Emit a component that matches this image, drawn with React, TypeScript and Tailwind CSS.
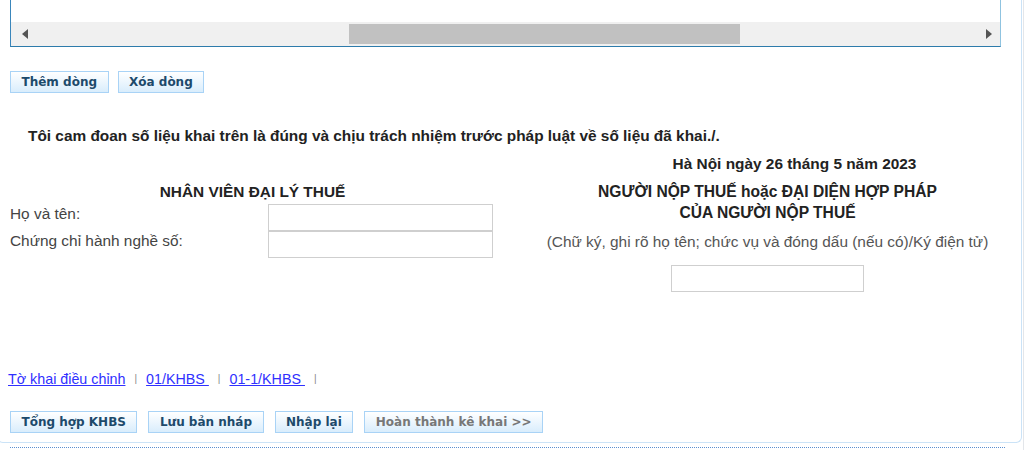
import React from 'react';

const btn =
  "h-[22px] px-[10.5px] border border-[#a9d3f6] bg-gradient-to-b from-white to-[#d9edfc] text-[12px] font-bold leading-none";

const Button: React.FC<{ label: string; disabled?: boolean }> = ({ label, disabled }) => (
  <button
    className={btn + (disabled ? " text-[#777]" : " text-[#1d4a6b]")}
    style={{ fontFamily: '"DejaVu Sans", Verdana, sans-serif' }}
  >
    {label}
  </button>
);

const Sep = () => <span className="mx-[9px] text-[10px] text-[#888]">|</span>;

export default function App() {
  return (
    <div
      className="w-[1024px] h-[450px] overflow-hidden bg-white relative text-[#333]"
      style={{ fontFamily: '"Liberation Sans", Arial, sans-serif' }}
    >
      <div className="absolute right-0 top-0 h-full w-px bg-[#e3e6ea]" />
      <div className="-ml-[3px] w-[1025px] h-[443px] border-x border-b border-[#cbe3f7] rounded-b-[6px] flex flex-col">
        {/* grid box with horizontal scrollbar */}
        <div className="ml-[12px] w-[991px] h-[47px] border-l border-l-[#3a86bb] border-r border-r-[#8fc3e0] border-b border-b-[#2d7bab] flex flex-col">
          <div className="flex-1 bg-white" />
          <div className="h-[24px] bg-[#f0f0f0] flex items-center">
            <div className="w-[17px] flex justify-end">
              <svg width="6" height="10" viewBox="0 0 6 10"><path d="M6 0 L0 5 L6 10 Z" fill="#555" /></svg>
            </div>
            <div className="flex-1 h-full py-[2px] flex">
              <div className="ml-[321px] w-[391px] h-full bg-[#c1c1c1]" />
            </div>
            <div className="w-[17px] flex justify-start pl-[3px]">
              <svg width="6" height="10" viewBox="0 0 6 10"><path d="M0 0 L6 5 L0 10 Z" fill="#555" /></svg>
            </div>
          </div>
        </div>

        <div className="ml-[12px] mt-[24px] flex gap-[9px]">
          <Button label="Thêm dòng" />
          <Button label="Xóa dòng" />
        </div>

        <p className="ml-[30px] mt-[34px] text-[15.4px] font-bold text-[#222] leading-[18px]">
          Tôi cam đoan số liệu khai trên là đúng và chịu trách nhiệm trước pháp luật về số liệu đã khai./.
        </p>

        <div className="ml-[2px] grid grid-cols-[505px_1fr] gap-x-[9px]">
          <div />
          <div className="mt-[10px] pl-[54px] text-center text-[15.4px] font-bold text-[#222] leading-[18px]">
            Hà Nội ngày 26 tháng 5 năm 2023
          </div>

          <div className="flex flex-col">
            <div className="mt-[8px] text-center text-[15.4px] font-bold text-[#222] leading-[21px]">
              NHÂN VIÊN ĐẠI LÝ THUẾ
            </div>
            <div className="mt-[2px] flex">
              <div className="w-[268px] pl-[10px] flex flex-col text-[15.4px] text-[#444]">
                <span className="h-[27px] leading-[20px]">Họ và tên:</span>
                <span className="h-[27px] leading-[20px]">Chứng chỉ hành nghề số:</span>
              </div>
              <div className="flex flex-col">
                <input className="w-[225px] h-[27px] border border-[#cfcfcf] bg-white outline-none" />
                <input className="w-[225px] h-[27px] border border-[#cfcfcf] bg-white outline-none" />
              </div>
            </div>
          </div>

          <div className="flex flex-col items-center">
            <div className="mt-[8px] text-center text-[15.6px] font-bold text-[#222] leading-[21px]">
              NGƯỜI NỘP THUẾ hoặc ĐẠI DIỆN HỢP PHÁP
              <br />
              CỦA NGƯỜI NỘP THUẾ
            </div>
            <div className="mt-[9px] text-[15.4px] text-[#555] leading-[20px]">
              (Chữ ký, ghi rõ họ tên; chức vụ và đóng dấu (nếu có)/Ký điện tử)
            </div>
            <input className="mt-[13px] w-[193px] h-[27px] border border-[#cfcfcf] bg-white outline-none" />
          </div>
        </div>

        <div className="ml-[10px] mt-[79px] text-[14.3px] leading-[16px] flex items-center">
          <a href="#" className="text-[#3030ff] underline">Tờ khai điều chỉnh</a>
          <Sep />
          <a href="#" className="text-[#3030ff] underline">01/KHBS&nbsp;</a>
          <Sep />
          <a href="#" className="text-[#3030ff] underline">01-1/KHBS&nbsp;</a>
          <Sep />
        </div>

        <div className="ml-[12px] mt-[24px] flex gap-[11px]">
          <Button label="Tổng hợp KHBS" />
          <Button label="Lưu bản nháp" />
          <Button label="Nhập lại" />
          <Button label="Hoàn thành kê khai >>" disabled />
        </div>
      </div>
      <div className="ml-[10px] mt-[4px] w-[995px] border-t border-dotted border-[#5b8fd0]" />
    </div>
  );
}
